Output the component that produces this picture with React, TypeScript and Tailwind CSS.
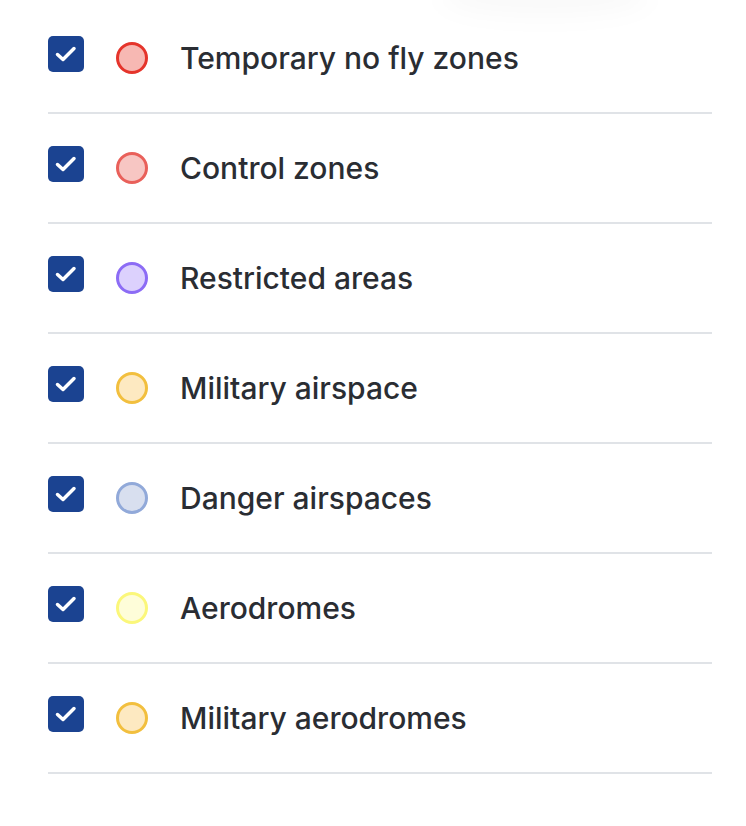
const LAYERS = [
  { name: "Temporary no fly zones", ring: "border-[#e5342b] bg-[#f7b8b3]" },
  { name: "Control zones", ring: "border-[#e9605a] bg-[#f7c6c3]" },
  { name: "Restricted areas", ring: "border-[#8c6cf5] bg-[#dcd1fd]" },
  { name: "Military airspace", ring: "border-[#f2bf3e] bg-[#fde9c1]" },
  { name: "Danger airspaces", ring: "border-[#91a9d9] bg-[#d8dfef]" },
  { name: "Aerodromes", ring: "border-[#fbf77a] bg-[#fefdd9]" },
  { name: "Military aerodromes", ring: "border-[#f2bf3e] bg-[#fde9c1]" },
];

const Check = () => (
  <div className="mb-2 h-9 w-9 shrink-0 rounded-[5px] bg-[#1b4391]">
    <svg width="36" height="36" viewBox="0 0 36 36" fill="none" className="block">
      <path d="M9.5 18.5l5.5 5 11-11" stroke="white" strokeWidth="3.5" strokeLinecap="round" strokeLinejoin="round" />
    </svg>
  </div>
);

export default function App() {
  return (
    <main
      className="relative min-h-[826px] w-[746px] overflow-hidden bg-white pl-12 pr-[34px] pt-1"
      style={{ fontFamily: "Inter, 'Noto Sans', sans-serif" }}
    >
      {/* faint shadow of the panel above */}
      <div className="pointer-events-none absolute -top-6 left-[440px] h-[40px] w-[210px] rounded-[50%] bg-black/[0.025] blur-md" />
      {LAYERS.map((l) => (
        <div key={l.name} className="relative flex h-[110px] items-center border-b-2 border-[#e0e3e7]">
          <Check />
          <span className={`ml-8 h-8 w-8 shrink-0 rounded-full border-[3px] ${l.ring}`} />
          <span className="ml-8 text-[30px] font-medium text-[#2a2d33]">{l.name}</span>
        </div>
      ))}
    </main>
  );
}
